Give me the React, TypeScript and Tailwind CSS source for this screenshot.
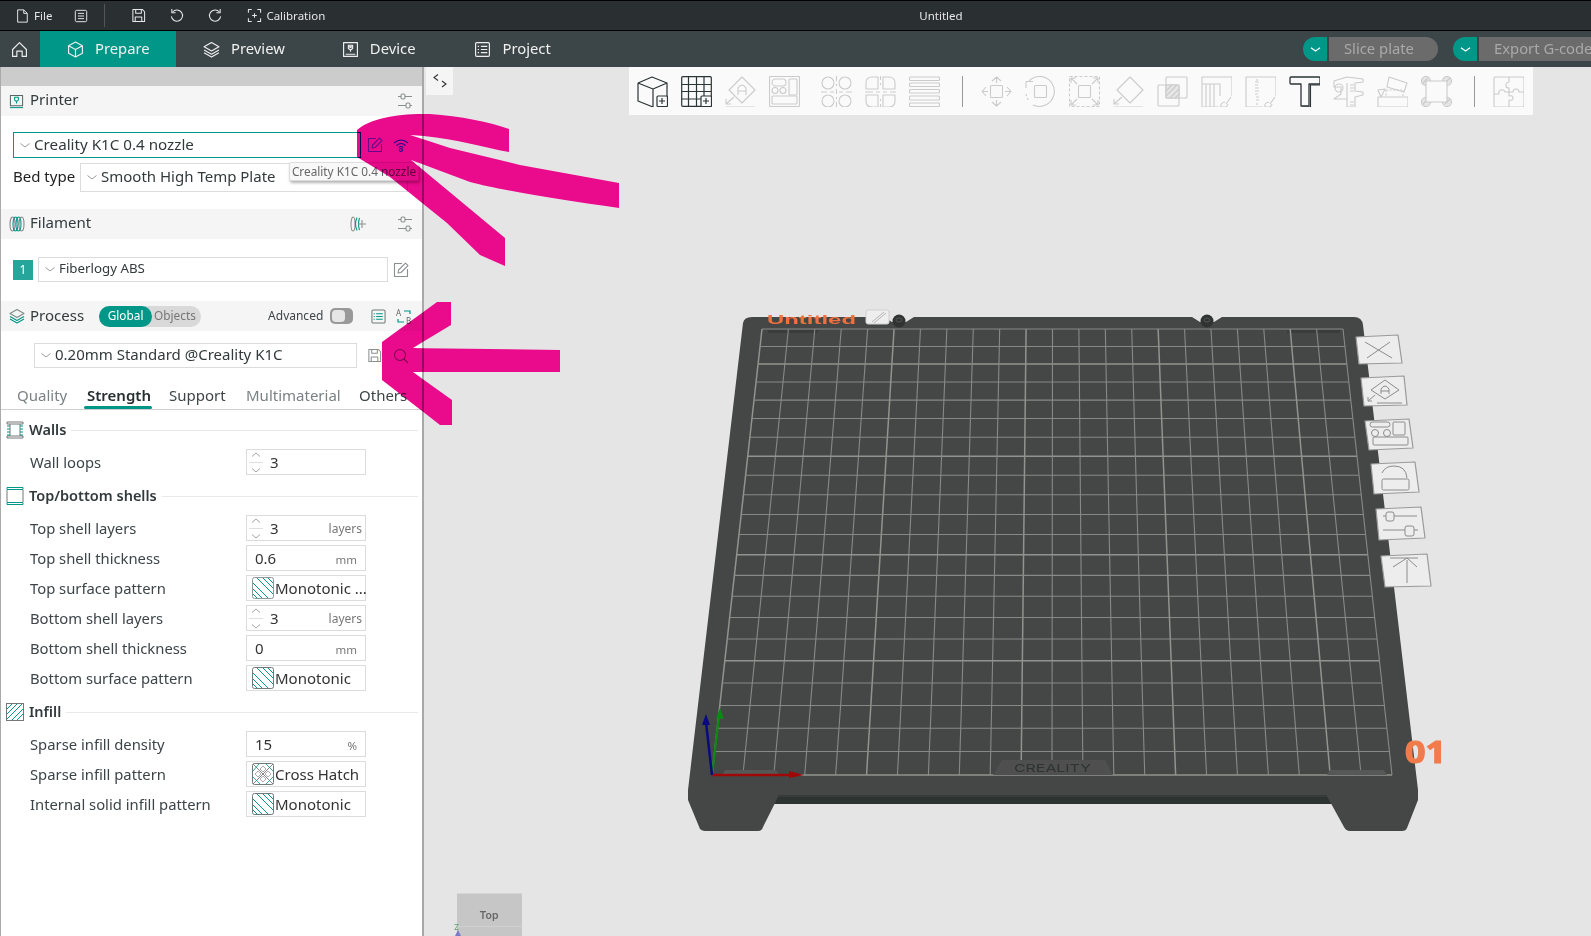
import React from "react";

const T = "#009688";

const Ic = ({ s = 16, vb = 16, c = "currentColor", w = 1.1, children }: { s?: number; vb?: number; c?: string; w?: number; children: React.ReactNode }) => (
  <svg width={s} height={s} viewBox={`0 0 ${vb} ${vb}`} fill="none" stroke={c} strokeWidth={w} strokeLinejoin="round" className="shrink-0">
    {children}
  </svg>
);

const Tune = () => (
  <Ic s={16} c="#8a8f90">
    <path d="M1 3.500h3M8 3.500h7M1 12.500h8M13 12.500h2" />
    <rect x="4" y="1" width="4" height="5" rx="1.500" />
    <rect x="9" y="10" width="4" height="5" rx="1.500" />
  </Ic>
);
const Chev = ({ c = "#9a9a9a" }: { c?: string }) => (
  <svg width="10" height="5" viewBox="0 0 10 5" fill="none" stroke={c} strokeWidth="1" className="shrink-0"><path d="M0.500 0.500 5 4l4.500-3.500" /></svg>
);
const Pencil = ({ c = "#8a8f90" }: { c?: string }) => (
  <Ic s={16} c={c}>
    <path d="M9 1.500H1.500v13h13V7" />
    <path d="M5 11l.6-3L12.500 1.200 15 3.600 8 10.500z" />
  </Ic>
);

const Toolbar = {
  cube: (
    <>
      <path d="M1 7 15 1l15 6v13M1 7v18l15 6M1 7l15 6 14-6M16 13v18" />
      <rect x="20" y="20" width="10.500" height="10.500" rx="1" fill="#fafafa" />
      <path d="M25 22v6M22 25h6" />
    </>
  ),
  grid: (
    <>
      <rect x="0.700" y="0.700" width="29.600" height="29.600" rx="1" />
      <path d="M1 8.500h29M1 15.500h29M1 23h19M7.500 1v29M15.500 1v29M23 1v19" />
      <rect x="20" y="20" width="10.500" height="10.500" rx="1" fill="#fafafa" />
      <path d="M25 22v6M22 25h6" />
    </>
  ),
  arrange: (
    <>
      <path d="M17 1 30 14 17 27 4 14z" />
      <path d="M13 19v-7q4-6 8 0v7M13 15h8" />
      <path d="M9 21 1 28M1 23v5h5M1 31h29" />
    </>
  ),
  layout: (
    <>
      <rect x="0.500" y="0.500" width="30" height="30" rx="1" />
      <rect x="3" y="3" width="14" height="7" rx="3.500" />
      <rect x="20" y="3" width="8" height="16" rx="1" />
      <circle cx="6" cy="14.500" r="3" />
      <circle cx="14" cy="14.500" r="3" />
      <rect x="3" y="20" width="25" height="8" rx="1" />
    </>
  ),
  circles: (
    <>
      <circle cx="7" cy="7" r="6" /><circle cx="24" cy="7" r="6" /><circle cx="7" cy="25" r="6" /><circle cx="24" cy="25" r="6" />
      <path d="M15.500 0v5M15.500 8v2M15.500 13v5M15.500 21v2M15.500 26v5M0 16h6M9 16h4M18 16h4M25 16h6" />
    </>
  ),
  half: (
    <>
      <path d="M13 1H7Q1 1 1 7v6h12zM18 1h6q6 0 6 6v6H18zM13 31H7q-6 0-6-6v-6h12zM18 31h6q6 0 6-6v-6H18z" />
      <path d="M15.500 0v4M15.500 7v2M15.500 23v2M15.500 28v3M0 16h8M11 16h4M18 16h4M25 16h6" />
    </>
  ),
  lines: (
    <>
      <rect x="0.500" y="1" width="30" height="3.500" rx="1" />
      <rect x="0.500" y="7" width="30" height="3.500" rx="1" />
      <rect x="0.500" y="13.500" width="30" height="3.500" rx="1" />
      <rect x="0.500" y="20" width="30" height="4" rx="1" />
      <rect x="0.500" y="27" width="30" height="3.500" rx="1" />
    </>
  ),
  move: (
    <>
      <rect x="9.500" y="9.500" width="12" height="12" rx="1" />
      <path d="M15.500 1v6M11 5l4.500-4 4.500 4M15.500 24v6M11 26l4.500 4 4.500-4M1 15.500h6M5 11l-4 4.500 4 4.500M24 15.500h6M26 11l4 4.500-4 4.500" />
    </>
  ),
  rotate: (
    <>
      <rect x="9.500" y="9.500" width="12" height="12" rx="1" />
      <path d="M4 5q5-5 12-4.500A15 15 0 1 1 8 29" />
      <path d="M1 18q1 4 3 7" strokeDasharray="2 2" />
      <path d="M1 12V5.500h7" />
    </>
  ),
  scale: (
    <>
      <rect x="0.500" y="0.500" width="30" height="30" strokeDasharray="3 2" />
      <rect x="9.500" y="9.500" width="12" height="12" rx="1" />
      <path d="M2 2l6 6M2 7V2h5M29 2l-6 6M24 2h5v5M2 29l6-6M2 24v5h5M29 29l-6-6M24 29h5v-5" />
    </>
  ),
  lay: (
    <>
      <path d="M17 1 30 14 17 27 4 14z" />
      <path d="M9 21 1 28M1 23v5h5M1 31h29" />
    </>
  ),
  bool: (
    <>
      <rect x="9" y="1" width="21" height="21" rx="1" />
      <rect x="1" y="9" width="21" height="21" rx="1" />
      <rect x="9" y="9" width="13" height="13" fill="#e6e6e6" />
      <path d="M9 15l6-6M9 20l11-11M13 22l9-9M18 22l4-4" />
    </>
  ),
  paint1: (
    <>
      <path d="M1 31V1h30v19M1 8h18v12M5 8v23M9 8v23M13 8v23M1 31h17" />
      <path d="M30 21 25 28M24 26q-5 1-4 5h5q2-2 2-3" />
    </>
  ),
  paint2: (
    <>
      <path d="M1 31V1h30v19M1 31h17" />
      <path d="M12 3v2M10 6h4M13 9h-3M14 12h-4M10 15h4M13 18h-3M14 21h-3M11 24h3M12 27v2" />
      <path d="M30 21 25 28M24 26q-5 1-4 5h5q2-2 2-3" />
    </>
  ),
  text: (
    <>
      <path d="M2 1h28q1 0 1 1v5q0 1-1 1H20v22h-8V8H2q-1 0-1-1V2q0-1 1-1z" strokeWidth="1.300" />
      <path d="M31 3h1v6H21.500v22h-8" strokeWidth="1.100" />
    </>
  ),
  measure: (
    <>
      <path d="M1 5 14 1l16 2v3l-8 1v8l8 1v3l-8 2v10h-8v-8H1l7-5v-7H1z" />
      <circle cx="6" cy="12" r="4" />
      <path d="M17 9h4M17 12h4M17 15h4M14 7v16M17 26h4M17 29h4" />
    </>
  ),
  support: (
    <>
      <rect x="1" y="21" width="30" height="10" />
      <path d="M12 1l18 6-3 9-17-5z" />
      <path d="M9 14h17v7M9 14v7" strokeDasharray="2 1.500" />
      <path d="M8 13 1 14l3 7z" />
    </>
  ),
  seam: (
    <>
      <circle cx="5" cy="5" r="4.500" fill="#e6e6e6" /><circle cx="26" cy="5" r="4.500" fill="#e6e6e6" /><circle cx="5" cy="26" r="4.500" fill="#e6e6e6" /><circle cx="26" cy="26" r="4.500" fill="#e6e6e6" />
      <path d="M2 7l5-5M24 7l5-5M2 28l5-5M24 28l5-5" />
      <rect x="5" y="5" width="21" height="21" fill="#fafafa" />
    </>
  ),
  puzzle: (
    <>
      <rect x="1" y="1" width="30" height="30" rx="1" />
      <path d="M16 1v5q-4 1-3 4 0 2 3 2v4h-4q-1-3-4-2-3 1-2 4H1M16 16v4q4-1 4 2 0 3-4 2v7M16 16h4q0-3 3-3t3 3h5" />
    </>
  ),
};

const Tool = ({ k, on = false }: { k: keyof typeof Toolbar; on?: boolean }) => (
  <svg width="31" height="31" viewBox="0 0 31 31" fill="none" stroke={on ? "#2b3436" : "#cbcbcb"} strokeWidth={on ? 1.200 : 1.100} strokeLinejoin="round" className="shrink-0">
    {Toolbar[k]}
  </svg>
);

const Hatch = ({ kind = "mono", dim = false }: { kind?: "mono" | "cross"; dim?: boolean }) => (
  <svg width="22" height="22" viewBox="0 0 22 22" fill="none" className="shrink-0">
    <rect x="0.500" y="0.500" width="21" height="21" rx="2" stroke={dim ? "#8f9a98" : "#6f7a78"} fill="#fff" />
    {kind === "mono" ? (
      <path d="M1 6l15 15M1 12l9 9M1 17l4 4M5 1l16 16M11 1l10 10M16 1l5 5" stroke={T} strokeWidth="1" />
    ) : (
      <>
        <path d="M1 1l20 20M21 1 1 21" stroke="#666" strokeWidth="0.800" />
        <path d="M11 3l3 3-3 3-3-3zM3 11l3-3 3 3-3 3zM19 11l-3-3-3 3 3 3zM11 19l-3-3 3-3 3 3z" stroke="#999" strokeWidth="0.800" />
        <path d="M1 8l6-7M21 14l-7 7M14 1l7 7M1 14l7 7" stroke={T} strokeWidth="0.800" />
      </>
    )}
  </svg>
);

const SectionIcon = ({ kind }: { kind: "walls" | "shell" | "infill" }) => (
  <svg width="18" height="18" viewBox="0 0 18 18" fill="none" className="shrink-0">
    {kind === "infill" ? (
      <>
        <rect x="0.500" y="0.500" width="17" height="17" stroke="#777" />
        <path d="M1 6 6 1M1 11 11 1M1 16 16 1M6 17 17 6M11 17l6-6" stroke={T} />
      </>
    ) : kind === "walls" ? (
      <>
        <path d="M1 1h16v2H1zM1 15h16v2H1z" stroke="#777" />
        <path d="M4 3v12M14 3v12" stroke="#777" />
        <path d="M1 5h3M1 8h3M1 11h3M1 14h3M14 5h3M14 8h3M14 11h3M14 14h3" stroke={T} />
      </>
    ) : (
      <>
        <path d="M1 0.500h16v2H1zM1 15.500h16v2H1z" stroke={T} />
        <path d="M1 3v12M17 3v12" stroke="#777" />
      </>
    )}
  </svg>
);

const Row = ({ label, children }: { label: string; children: React.ReactNode }) => (
  <div className="flex items-center h-[26px] pl-[29px] text-[14.800px] text-[#3d4548]">
    <span className="w-[216px] whitespace-nowrap">{label}</span>
    {children}
  </div>
);
const Box = ({ children }: { children?: React.ReactNode }) => (
  <div className="relative flex items-center w-[120px] h-[26px] border border-[#dcdcdc] bg-white">{children}</div>
);
const Spin = ({ v, unit }: { v: string; unit?: string }) => (
  <Box>
    <div className="flex flex-col items-center justify-between ml-[2px] w-[14px] h-[21px]">
      <svg width="10" height="5" viewBox="0 0 10 5" fill="none" stroke="#a5a5a5"><path d="M1 4.500 5 1l4 3.500" /></svg>
      <div className="w-[14px] h-px bg-[#e0e0e0]" />
      <svg width="10" height="5" viewBox="0 0 10 5" fill="none" stroke="#a5a5a5"><path d="M1 .5 5 4l4-3.500" /></svg>
    </div>
    <span className="ml-[7px] text-[#333] text-[15px]">{v}</span>
    {unit && <span className="ml-auto mr-[3px] mt-[1px] text-[12px] text-[#777]">{unit}</span>}
  </Box>
);
const Num = ({ v, unit }: { v: string; unit: string }) => (
  <Box>
    <span className="ml-[8px] text-[#333] text-[15px]">{v}</span>
    <span className="ml-auto mr-[8px] text-[11.500px] text-[#777] mt-[4px]">{unit}</span>
  </Box>
);
const Combo = ({ v, kind, dim }: { v: string; kind?: "mono" | "cross"; dim?: boolean }) => (
  <Box>
    <div className="ml-[5px] mr-px"><Hatch kind={kind} dim={dim} /></div>
    <span className="text-[#333] text-[15px] whitespace-nowrap">{v}</span>
  </Box>
);
const Section = ({ kind, title }: { kind: "walls" | "shell" | "infill"; title: string }) => (
  <div className="flex items-center h-[22px] pl-[5px] pr-[4px] gap-[5px]">
    <SectionIcon kind={kind} />
    <span className="font-semibold text-[14.500px] text-[#323a3c] whitespace-nowrap">{title}</span>
    <div className="flex-1 h-px bg-[#e8e8e8]" />
  </div>
);
const Header = ({ children, className = "" }: { children: React.ReactNode; className?: string }) => (
  <div className={"flex items-center h-[30px] bg-[#f5f5f5] pl-[8px] " + className}>{children}</div>
);
const Select = ({ v, className = "", text = "text-[15px]" }: { v: string; className?: string; text?: string }) => (
  <div className={"flex items-center gap-[4px] bg-white border pl-[6px] " + className}>
    <Chev />
    <span className={"text-[#323a3c] whitespace-nowrap pb-[2px] " + text}>{v}</span>
  </div>
);

const BedGrid = () => {
  const n = 22;
  const s0 = 581, s1 = 680;
  const sc = (u: number) => 1 / (1 / s0 + u * (1 / s1 - 1 / s0));
  const els: React.ReactNode[] = [];
  for (let i = 0; i <= n; i++) {
    const u = i / n;
    const s = sc(u);
    const t = (s - s0) / (s1 - s0);
    const y = 329 + 446 * t;
    const xl = 762 + (712 - 762) * t;
    const xr = 1343 + (1392 - 1343) * t;
    const thick = (n - i) % 5 === 0;
    els.push(<line key={"h" + i} x1={xl} x2={xr} y1={y} y2={y} stroke={thick ? "#90948f" : "#868a87"} strokeWidth={thick ? 1.500 : 1.100} />);
    const tx = 762 + (581 * i) / n;
    const bx = 712 + (680 * i) / n;
    const vThick = i % 5 === 0;
    els.push(<line key={"v" + i} x1={tx} x2={bx} y1={329} y2={775} stroke={vThick ? "#90948f" : "#868a87"} strokeWidth={vThick ? 1.500 : 1.100} />);
  }
  return <g>{els}</g>;
};

const Tile = ({ pts, children }: { pts: string; children: React.ReactNode }) => (
  <g>
    <polygon points={pts} fill="#ededed" stroke="#9a9a9a" strokeWidth="1.200" strokeLinejoin="round" />
    <g fill="none" stroke="#8c8c8c" strokeWidth="1">{children}</g>
  </g>
);

const Scene = () => (
  <svg viewBox="424 67 1167 869" width="1167" height="869" className="absolute inset-0">
    <path d="M778 795 773 804H1332L1327 795Z" fill="#2d3331" />
    <path
      d="M743 323Q744 317 752 317H884L892 322H906L914 317H1192L1200 322H1214L1222 317H1354Q1362 317 1363 325L1418 790V800L1407 828Q1406 831 1402 831H1350Q1346 831 1344 827L1328 798Q1326 795 1322 795H783Q780 795 778 797L763 827Q762 831 758 831H705Q702 831 700 829L688 800V790Z"
      fill="#444746"
    />
    <rect x="778" y="795" width="549" height="2" fill="#373b3a" />
    <rect x="768" y="330" width="50" height="3" fill="#3a3d3c" />
    <rect x="1287" y="330" width="53" height="3" fill="#3a3d3c" />
    <BedGrid />
    <path d="M993 775 1002 760H1105L1113 775Z" fill="#504f4f" />
    <path d="M722 775 725 770H776L779 775Z" fill="#565857" />
    <path d="M1327 775 1330 770H1384L1387 775Z" fill="#565857" />
    <text x="1014" y="772" textLength="77" lengthAdjust="spacingAndGlyphs" fontFamily="Inter, sans-serif" fontSize="11" fill="#2d3331">CREALITY</text>
    <text x="767" y="324" textLength="89" lengthAdjust="spacingAndGlyphs" fontFamily="'Liberation Sans', sans-serif" fontWeight="700" fontSize="13" fill="#f0703f">Untitled</text>
    <text x="1405" y="763" textLength="41" lengthAdjust="spacingAndGlyphs" fontFamily="'Open Sans', sans-serif" fontWeight="700" fontSize="31" fill="#f27b4c" stroke="#f27b4c" strokeWidth="1.200">01</text>
    <rect x="866" y="310" width="23" height="14" rx="2" fill="#eeeeee" stroke="#cfcfcf" />
    <path d="M872 322 884 312M874 323 886 313" stroke="#b5b5b5" />
    <circle cx="899" cy="321" r="6.500" fill="#2f3332" />
    <ellipse cx="899" cy="320" rx="3" ry="2" fill="none" stroke="#555" />
    <circle cx="1207" cy="321" r="6.500" fill="#2f3332" />
    <ellipse cx="1207" cy="320" rx="3" ry="2" fill="none" stroke="#555" />

    <Tile pts="1356,337 1398,335 1402,363 1359,364">
      <path d="M1365 342 1392 358M1390 342 1367 358" />
    </Tile>
    <Tile pts="1361,378 1404,376 1407,405 1364,406">
      <path d="M1385 380 1399 390 1385 399 1371 390Z" />
      <path d="M1381 394V389Q1385 383 1389 389V394M1381 391H1389" />
      <path d="M1377 403H1402M1375 395 1368 401M1368 397V401H1372" />
    </Tile>
    <Tile pts="1365,421 1409,419 1413,448 1369,450">
      <rect x="1370" y="422" width="20" height="5" rx="2.500" />
      <rect x="1393" y="422" width="12" height="13" rx="1" />
      <circle cx="1375" cy="433" r="3.500" />
      <circle cx="1387" cy="433" r="3.500" />
      <rect x="1373" y="437" width="35" height="8" rx="1" />
    </Tile>
    <Tile pts="1371,464 1415,462 1419,492 1374,494">
      <rect x="1382" y="479" width="27" height="11" rx="1.500" />
      <path d="M1382 473Q1385 466 1394 466Q1406 466 1407 478" />
    </Tile>
    <Tile pts="1376,509 1421,507 1425,538 1379,540">
      <path d="M1383 516H1386M1394 516H1417M1383 530H1405M1414 530H1418" />
      <rect x="1386" y="512" width="8" height="9" rx="2" />
      <rect x="1405" y="526" width="9" height="10" rx="2" />
    </Tile>
    <Tile pts="1381,556 1427,554 1431,586 1385,587">
      <path d="M1390 558H1418M1407 560V583M1393 567 1407 558 1417 567" />
    </Tile>

    <line x1="712" y1="775" x2="796" y2="775" stroke="#a00808" strokeWidth="2.500" />
    <path d="M789 771 804 775 789 778Z" fill="#a00808" />
    <line x1="712" y1="775" x2="719" y2="716" stroke="#0a8a12" strokeWidth="2.200" />
    <path d="M716 718 720 708 724 719Z" fill="#0a8a12" />
    <line x1="712" y1="775" x2="706" y2="722" stroke="#0a0a80" strokeWidth="2.500" />
    <path d="M702 725 706 714 710 725Z" fill="#0a0a80" />

    <rect x="457" y="893" width="65" height="43" fill="#c6c6c6" />
    <rect x="457" y="893" width="65" height="1" fill="#d6d6d6" />
    <rect x="457" y="926" width="65" height="1" fill="#d0d0d0" />
    <text x="489" y="919" textAnchor="middle" fontFamily="Inter, sans-serif" fontWeight="600" fontSize="10.500" fill="#666">Top</text>
    <text x="454" y="930" fontFamily="Inter, sans-serif" fontSize="8" fill="#5fa070">Z</text>
    <path d="M455 936 458 930 461 936Z" fill="#7a7ac8" />
  </svg>
);

const TopIcon = {
  menu: <><rect x="1.500" y="1.500" width="13" height="13" rx="1.500" /><path d="M4.500 5h7M4.500 8h7M4.500 11h7" /></>,
  save: <><path d="M2 1.500h10l2.500 2.500v10.500H2z" /><path d="M5 1.500v4h6v-4M4.500 14.500V9.500h7v5" /></>,
  undo: <path d="M4 4a6 6 0 1 1-1.500 5M3 1v4h4" />,
  redo: <path d="M12 4a6 6 0 1 0 1.500 5M13 1v4H9" />,
  cal: <path d="M5 1.500H1.500V5M11 1.500h3.500V5M5 14.500H1.500V11M11 14.500h3.500V11M8 5.500v5M5.500 8h5" />,
  home: <path d="M1.500 8 8 1.500 14.500 8v6.500h-4V9.500h-5v5h-4z" />,
  box: <path d="M8 1 14.500 4.500v7L8 15l-6.500-3.500v-7zM1.500 4.500 8 8l6.500-3.500M8 8v7" />,
  layers: <><path d="M8 1.500 15 5.500 8 9.500 1 5.500z" /><path d="M1 8.500l7 4 7-4M1 11l7 4 7-4" /></>,
  device: <><rect x="1.500" y="1.500" width="13" height="13" /><path d="M3.500 12.500h9M8 8v2M6 4h4v3l-2 1.500L6 7z" /><circle cx="8" cy="5.500" r="0.800" /></>,
  project: <><rect x="1.500" y="1.500" width="13" height="13" rx="1" /><path d="M6.500 5h6M6.500 8h6M6.500 11h6M3.500 5h1.200M3.500 8h1.200M3.500 11h1.200" /></>,
};

const NavTab = ({ icon, label, className = "" }: { icon: React.ReactNode; label: string; className?: string }) => (
  <div className={"flex items-center gap-[11px] text-[14.800px] text-[#f0f0f0] " + className}>
    <Ic s={17} c="#eeeeee">{icon}</Ic>
    <span className="whitespace-nowrap pb-[2px]">{label}</span>
  </div>
);

const ActionBtn = ({ label, w }: { label: string; w: string }) => (
  <div className="flex items-center gap-[2px]">
    <div className="flex items-center justify-center w-[24px] h-[24px] rounded-l-full bg-[#009688]">
      <svg width="11" height="5" viewBox="0 0 11 5" fill="none" stroke="#fff" strokeWidth="1.200"><path d="M1 .8 5.500 4 10 .8" /></svg>
    </div>
    <div className={"flex items-center h-[24px] bg-[#6b6b6b] rounded-r-full text-[14.800px] text-[#a9a9a9] whitespace-nowrap pl-[15px] pb-[2px] " + w}>{label}</div>
  </div>
);

const PINK =
  "M357 130C370 118 400 113 430 114C460 116 490 122 509 129V152C480 147 450 137 410 135L450 148L520 165L619 183V208C560 200 500 190 470 182L411 160L505 238V266L480 255L447 223L390 177L357 157ZM382 342 437 302H451V325L413 348 560 350V372H413L452 400V425H440L382 380Z";

const Pink = () => (
  <>
    <svg viewBox="0 0 1591 936" width="1591" height="936" className="absolute inset-0 pointer-events-none mix-blend-multiply">
      <clipPath id="pink-side"><rect x="0" y="0" width="424" height="936" /></clipPath>
      <path fill="#ea0a8c" d={PINK} clipPath="url(#pink-side)" />
    </svg>
    <svg viewBox="0 0 1591 936" width="1591" height="936" className="absolute inset-0 pointer-events-none">
      <clipPath id="pink-canvas"><rect x="424" y="0" width="1167" height="936" /></clipPath>
      <path fill="#ea0a8c" d={PINK} clipPath="url(#pink-canvas)" />
    </svg>
  </>
);

export default function App() {
  return (
    <div className="relative w-[1591px] h-[936px] overflow-hidden flex flex-col bg-[#e5e5e5] font-['Noto_Sans',sans-serif]">
      {/* title bar */}
      <div className="flex items-center h-[31px] shrink-0 bg-[#2a3032] border-y border-black text-[11.500px] text-[#e6e6e6] pl-[15px]">
        <Ic s={14} c="#e8e8e8"><path d="M3 1h7l4 4v10H3zM10 1v4h4" /></Ic>
        <span className="ml-[5px]">File</span>
        <div className="ml-[22px]"><Ic s={14} c="#e8e8e8">{TopIcon.menu}</Ic></div>
        <div className="ml-[16px] w-px h-[23px] bg-[#555]" />
        <div className="ml-[26px]"><Ic s={15} c="#e8e8e8">{TopIcon.save}</Ic></div>
        <div className="ml-[23px]"><Ic s={15} c="#e8e8e8">{TopIcon.undo}</Ic></div>
        <div className="ml-[24px]"><Ic s={15} c="#e8e8e8">{TopIcon.redo}</Ic></div>
        <div className="ml-[24px]"><Ic s={15} c="#e8e8e8">{TopIcon.cal}</Ic></div>
        <span className="ml-[4px] whitespace-nowrap">Calibration</span>
        <span className="ml-[594px] whitespace-nowrap">Untitled</span>
      </div>
      {/* nav */}
      <div className="flex items-center h-[36px] shrink-0 bg-[#3c4548] pl-[11px]">
        <Ic s={17} c="#eeeeee">{TopIcon.home}</Ic>
        <div className="ml-[12px] flex items-center h-full w-[136px] bg-[#009688] pl-[27px]">
          <NavTab icon={TopIcon.box} label="Prepare" />
        </div>
        <NavTab icon={TopIcon.layers} label="Preview" className="ml-[27px]" />
        <NavTab icon={TopIcon.device} label="Device" className="ml-[57px]" />
        <NavTab icon={TopIcon.project} label="Project" className="ml-[59px]" />
        <div className="ml-auto mr-[-32px] flex items-center gap-[15px]">
          <ActionBtn label="Slice plate" w="w-[109px]" />
          <ActionBtn label="Export G-code" w="w-[144px]" />
        </div>
      </div>
      {/* body */}
      <div className="flex flex-1 min-h-0">
        <div className="relative w-[424px] shrink-0 bg-white border-l border-l-[#aaaaaa] border-r-2 border-r-[#a8a8a8] flex flex-col">
          <div className="h-[19px] bg-[#cccccc]" />
          <Header>
            <Ic s={15} c="#5a6466">
              <rect x="1.500" y="1.500" width="13" height="11" />
              <path d="M6 3.500h4v3L8 8 6 6.500zM8 8v2" stroke={T} />
              <path d="M1 14.500h14" stroke={T} />
            </Ic>
            <span className="ml-[6px] text-[15px] text-[#323a3c] pb-[3px]">Printer</span>
            <div className="ml-auto mr-[9px]"><Tune /></div>
          </Header>

          <div className="flex items-center mt-[16px] pl-[12px]">
            <Select v="Creality K1C 0.4 nozzle" text="text-[15.200px]" className="w-[348px] h-[26px] border-[#009688]" />
            <div className="ml-[6px]"><Pencil c="#70b0ff" /></div>
            <div className="ml-[10px]">
              <Ic s={16} c="#20d8ff"><path d="M1 6q7-6 14 0M3.500 8.500q4.500-4 9 0M5.800 10.500q2.200-2 4.400 0" /><circle cx="8" cy="13" r="1.500" /></Ic>
            </div>
          </div>
          <div className="flex items-center mt-[5px] pl-[12px]">
            <span className="text-[15px] text-[#222] w-[67px] whitespace-nowrap pb-[2px]">Bed type</span>
            <Select v="Smooth High Temp Plate" className="w-[328px] h-[29px] border-[#dcdcdc]" />
          </div>

          <Header className="mt-[17px]">
            <Ic s={16} c="#7d8a88">
              <ellipse cx="3.500" cy="8" rx="2.500" ry="7" />
              <ellipse cx="6.500" cy="8" rx="2.500" ry="7" stroke={T} />
              <ellipse cx="9.500" cy="8" rx="2.500" ry="7" stroke={T} />
              <ellipse cx="12.500" cy="8" rx="2.500" ry="7" />
            </Ic>
            <span className="ml-[5px] text-[15px] text-[#323a3c] pb-[3px]">Filament</span>
            <div className="ml-auto flex items-center gap-[31px] mr-[9px]">
              <Ic s={16} c="#8a8f90">
                <ellipse cx="3" cy="8" rx="2" ry="7" />
                <path d="M7 1.500q-3 6.500 0 13M9.500 2q-2 6 0 12" stroke={T} />
                <path d="M8 8h8M12 4v8" />
              </Ic>
              <Tune />
            </div>
          </Header>

          <div className="flex items-center mt-[18px] pl-[12px]">
            <div className="w-[20px] h-[20px] flex items-center justify-center bg-[#26a69a] text-white text-[12px]">1</div>
            <Select v="Fiberlogy ABS" text="text-[13.300px]" className="ml-[5px] w-[350px] h-[25px] border-[#dcdcdc]" />
            <div className="ml-[5px]"><Pencil /></div>
          </div>

          <Header className="mt-[19px]">
            <Ic s={16} c="#7d8a88"><path d="M8 1.500 15 5.500 8 9.500 1 5.500z" /><path d="M1 8.500l7 4 7-4" stroke={T} /><path d="M1 11l7 4 7-4" stroke={T} /></Ic>
            <span className="ml-[5px] text-[15px] text-[#323a3c] pb-[2px]">Process</span>
            <div className="ml-[15px] flex items-center w-[102px] h-[21px] rounded-full bg-[#d9d9d9] text-[11.800px]">
              <div className="flex items-center justify-center w-[53px] h-full rounded-full bg-[#009688] text-white">Global</div>
              <span className="ml-[2px] text-[#777]">Objects</span>
            </div>
            <span className="ml-[67px] text-[12px] text-[#3c4548]">Advanced</span>
            <div className="ml-[7px] flex items-center w-[23px] h-[16px] rounded-[5px] bg-[#999] pl-[2px]">
              <div className="w-[13px] h-[12px] rounded-[4px] bg-[#e6e6e6]" />
            </div>
            <div className="ml-[18px]"><Ic s={15} c="#6f7a78"><rect x="1" y="1" width="14" height="14" rx="1.500" /><path d="M5.500 5h7M5.500 8h7M5.500 11h7M2.800 5h1.200M2.800 8h1.200M2.800 11h1.200" stroke={T} /></Ic></div>
            <div className="ml-[10px]">
              <svg width="17" height="17" viewBox="0 0 17 17" fill="none" className="shrink-0">
                <text x="0" y="8" fontSize="8" fill="#666" fontFamily="'Noto Sans', sans-serif">A</text>
                <text x="10" y="16" fontSize="8" fill="#666" fontFamily="'Noto Sans', sans-serif">B</text>
                <path d="M8 3h6v3M2 11v3h6" stroke={T} strokeWidth="1.200" />
              </svg>
            </div>
          </Header>

          <div className="flex items-center mt-[12px] pl-[33px]">
            <Select v="0.20mm Standard @Creality K1C" className="w-[323px] h-[25px] border-[#dcdcdc]" />
            <div className="ml-[10px]"><Ic s={15} c="#8a8f90">{TopIcon.save}</Ic></div>
            <div className="ml-[11px]"><Ic s={16} c="#8a8f90"><circle cx="7" cy="7" r="5.500" /><path d="M11 11l4 4" /></Ic></div>
          </div>

          {/* tabs */}
          <div className="flex items-end h-[42px] border-b border-[#cfcfcf] text-[15px] pl-[16px] whitespace-nowrap">
            <span className="text-[#7a8285] w-[67px] pb-[3px]">Quality</span>
            <div className="relative w-[85px] text-[#262e30] font-semibold pb-[3px]">
              <span className="ml-[3px]">Strength</span>
              <div className="absolute left-0 bottom-0 w-[68px] h-[3px] rounded-full bg-[#009688]" />
            </div>
            <span className="text-[#3d4548] w-[77px] pb-[3px]">Support</span>
            <span className="text-[#7a8285] w-[113px] pb-[3px]">Multimaterial</span>
            <span className="text-[#3d4548] pb-[3px]">Others</span>
          </div>

          <div className="mt-[9px]"><Section kind="walls" title="Walls" /></div>
          <div className="mt-[8px]"><Row label="Wall loops"><Spin v="3" /></Row></div>
          <div className="mt-[10px]"><Section kind="shell" title="Top/bottom shells" /></div>
          <div className="mt-[8px] flex flex-col gap-[4px]">
            <Row label="Top shell layers"><Spin v="3" unit="layers" /></Row>
            <Row label="Top shell thickness"><Num v="0.6" unit="mm" /></Row>
            <Row label="Top surface pattern"><Combo v="Monotonic ..." dim /></Row>
            <Row label="Bottom shell layers"><Spin v="3" unit="layers" /></Row>
            <Row label="Bottom shell thickness"><Num v="0" unit="mm" /></Row>
            <Row label="Bottom surface pattern"><Combo v="Monotonic" /></Row>
          </div>
          <div className="mt-[10px]"><Section kind="infill" title="Infill" /></div>
          <div className="mt-[8px] flex flex-col gap-[4px]">
            <Row label="Sparse infill density"><Num v="15" unit="%" /></Row>
            <Row label="Sparse infill pattern"><Combo v="Cross Hatch" kind="cross" /></Row>
            <Row label="Internal solid infill pattern"><Combo v="Monotonic" /></Row>
          </div>

          {/* tooltip */}
          <div className="absolute left-[288px] top-[95px] w-[130px] h-[19px] flex items-center justify-center bg-[#f8f8f8] border border-[#dddddd] rounded-[2px] shadow-[1px_2px_3px_rgba(0,0,0,0.3)] text-[11.800px] text-[#666] whitespace-nowrap">
            Creality K1C 0.4 nozzle
          </div>
        </div>

        {/* canvas */}
        <div className="relative flex-1 min-w-0">
          <Scene />
          <div className="relative flex items-start">
            <div className="ml-[2px] w-[27px] h-[28px] flex items-center justify-center bg-[#f5f5f5]">
              <svg width="14" height="16" viewBox="0 0 14 16" fill="none" stroke="#333" strokeWidth="1.100"><path d="M5 1.500 1 4.500l4 3M9 8l4 3-4 3" /></svg>
            </div>
            <div className="ml-[176px] flex items-center w-[904px] h-[48px] bg-[#fafafa] pl-[8px]">
              <div className="flex gap-[13px]">
                <Tool k="cube" on /><Tool k="grid" on /><Tool k="arrange" /><Tool k="layout" />
              </div>
              <div className="flex gap-[13px] ml-[21px]">
                <Tool k="circles" /><Tool k="half" /><Tool k="lines" />
              </div>
              <div className="ml-[22px] w-px h-[31px] bg-[#999]" />
              <div className="flex gap-[13px] ml-[18px]">
                <Tool k="move" /><Tool k="rotate" /><Tool k="scale" /><Tool k="lay" /><Tool k="bool" /><Tool k="paint1" /><Tool k="paint2" /><Tool k="text" on /><Tool k="measure" /><Tool k="support" /><Tool k="seam" />
              </div>
              <div className="ml-[22px] w-px h-[31px] bg-[#999]" />
              <div className="ml-[18px]"><Tool k="puzzle" /></div>
            </div>
          </div>
        </div>
      </div>
      <Pink />
    </div>
  );
}
